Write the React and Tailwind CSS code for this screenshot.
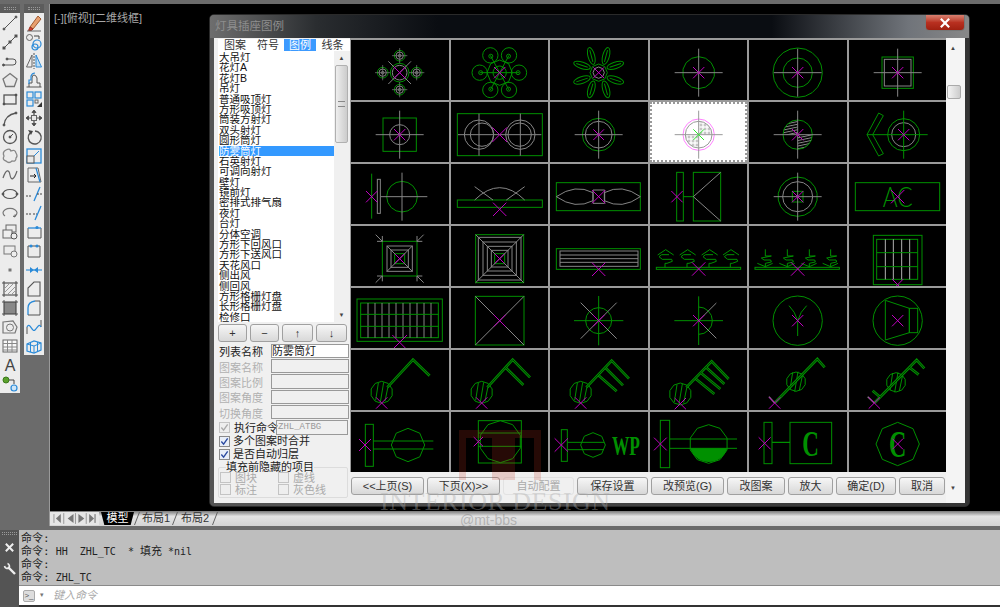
import React from 'react';

const G = '#009000';
const W = '#858585';
const M = '#c000c0';
const cjk = '"Liberation Sans", "Noto Sans CJK SC", sans-serif';

const ngon = (cx, cy, r, n, rot = -90) =>
  Array.from({ length: n }, (_, i) => {
    const a = ((rot + (360 * i) / n) * Math.PI) / 180;
    return `${(cx + r * Math.cos(a)).toFixed(1)},${(cy + r * Math.sin(a)).toFixed(1)}`;
  }).join(' ');

const L = ({ d, c = G, w = 3 }) => <path d={d} stroke={c} strokeWidth={w} fill="none" />;
const C = ({ x = 0, y = 0, r, c = G, w = 3 }) => <circle cx={x} cy={y} r={r} stroke={c} strokeWidth={w} fill="none" />;
const R = ({ x, y, x2, y2, c = G, w = 3 }) => <rect x={x} y={y} width={x2 - x} height={y2 - y} stroke={c} strokeWidth={w} fill="none" />;
const N = ({ x = 0, y = 0, r, n = 8, c = G, rot }) => <polygon points={ngon(x, y, r, n, rot)} stroke={c} strokeWidth={3} fill="none" />;
const X = ({ x = 0, y = 0, r = 17, c = M }) => (
  <path d={`M${x - r} ${y - r}L${x + r} ${y + r}M${x - r} ${y + r}L${x + r} ${y - r}`} stroke={c} strokeWidth={3} fill="none" />
);
const Cross = ({ a = 72, x = 0, c = W }) => <L d={`M${x - a} 0H${x + a}M${x} ${-a}V${a}`} c={c} />;
const Dbl = ({ d }) => (
  <>
    <L d={d} w={8} />
    <L d={d} c="#000" w={2} />
  </>
);
const Lamp = ({ x, y, r = 33 }) => (
  <>
    <N x={x} y={y} r={r} n={10} />
    <L d={`M${x - 18} ${y + 24}L${x - 10} ${y - 28}M${x - 4} ${y + 30}L${x + 6} ${y - 30}M${x + 10} ${y + 26}L${x + 20} ${y - 22}`} />
  </>
);
// squeezed serif letters, the symbols in the reference are tall and narrow
const Cad = ({ size, y = 0, x = 0, len, children }) => (
  <text x={x} y={y} fill={G} fontSize={size} fontWeight={700} fontFamily='"Liberation Serif", serif' textAnchor="middle" textLength={len} lengthAdjust="spacingAndGlyphs">
    {children}
  </text>
);

const sat = [[-51, 0], [51, 0], [0, -51], [0, 51]];
const flower = [[-28, -52], [28, -52], [-60, 0], [58, 0], [-28, 52], [28, 52]];
const petals = [[-22, -50, -15], [22, -50, 15], [-50, -22, -72], [50, -22, 72], [-50, 22, 72], [50, 22, -72], [-22, 50, 15], [22, 50, -15]];

const plantA = (x) => `M${x - 24} -11L${x} -27L${x + 24} -11M${x - 20} -6L${x - 12} -12H${x + 10}M${x - 20} -6L${x - 10} 2H${x + 18}L${x + 20} 8L${x + 4} 14H${x - 2}V26`;
const plantB = (x) => `M${x} -28V-8H${x + 18}L${x - 12} -2L${x - 4} 4H${x + 16}L${x + 18} 10L${x} 14M${x - 24} 14L${x} 24L${x + 22} 14M${x} 14V26`;

const cells = [
  // row 1
  <>
    <C r={28} /><C r={22} c={W} />
    <L d="M-34 -34L34 34M-34 34L34 -34" c={W} />
    {sat.map(([x, y], i) => (
      <g key={i}>
        <C x={x} y={y} r={16} /><C x={x} y={y} r={11} c={W} /><C x={x} y={y} r={4} c={W} />
        <L d={`M${x - 23} ${y}H${x + 23}M${x} ${y - 23}V${y + 23}`} c={W} w={2} />
      </g>
    ))}
    <X r={18} />
  </>,
  <>
    {flower.map(([x, y], i) => (
      <g key={i}><C x={x} y={y} r={23} /><C x={x * 0.95} y={y * 0.95} r={6} /></g>
    ))}
    <N r={38} n={8} /><C r={20} />
    <L d="M-60 0H58M-28 -52L28 52M28 -52L-28 52" />
    <X r={17} />
  </>,
  <>
    {petals.map(([x, y, a], i) => (
      <g key={i} transform={`translate(${x} ${y}) rotate(${a})`}>
        <ellipse rx={10} ry={26} stroke={G} strokeWidth={3} fill="none" />
        <L d="M0 -18V18" />
      </g>
    ))}
    <N r={26} n={8} /><N r={17} n={8} c={W} />
    <X r={16} />
  </>,
  <><N r={48} n={14} /><Cross /><X /></>,
  <><N r={74} n={20} /><C r={44} /><Cross /><X /></>,
  <><R x={-47} y={-47} x2={47} y2={47} /><R x={-40} y={-40} x2={40} y2={40} c={W} /><Cross /><X /></>,
  // row 2
  <><R x={-50} y={-50} x2={50} y2={50} /><C r={30} c={W} /><Cross /><X /></>,
  <>
    <R x={-127} y={-63} x2={128} y2={63} />
    <C x={-62} r={44} c={W} /><C x={-53} r={35} c={W} />
    <C x={62} r={44} c={W} /><C x={60} r={35} c={W} />
    <L d="M-125 0H125M-62 -63V63M62 -63V63" c={W} />
    <X r={22} />
  </>,
  <><C r={49} /><C r={40} c={W} /><Cross /><X r={16} /></>,
  <>
    <defs>
      <pattern id="dots" width="4" height="4" patternUnits="userSpaceOnUse">
        <rect width="4" height="4" fill="#fff" />
        <rect width="2" height="2" fill="#999" />
      </pattern>
    </defs>
    <path d="M0 0V-40A40 40 0 0 1 40 0ZM0 0V40A40 40 0 0 1 -40 0Z" fill="url(#dots)" />
    <C r={47} c="#ff80ff" /><C r={40} c="#999" />
    <Cross c="#999" />
    <X r={16} c="#30e830" />
  </>,
  <>
    <defs>
      <pattern id="hat" width="9" height="8" patternUnits="userSpaceOnUse" patternTransform="rotate(-12)">
        <rect width="9" height="3" fill="#888" />
      </pattern>
    </defs>
    <path d="M0 0V-44A44 44 0 0 0 -44 0ZM0 0V44A44 44 0 0 0 44 0Z" fill="url(#hat)" />
    <C r={44} /><Cross c={W} /><X />
  </>,
  <>
    <C x={18} r={48} /><C x={18} r={36} c={W} />
    <L d="M-92 0H90M18 -72V72" />
    <polygon points="-92,0 -57,-65 -43,-57 -75,0 -43,57 -57,64" stroke={G} strokeWidth={3} fill="none" />
    <X x={18} />
  </>,
  // row 3
  <>
    <L d="M-84 -69V66" />
    <R x={-67} y={-52} x2={-58} y2={50} c={W} />
    <N x={7} r={46} n={16} />
    <L d="M-57 0H83M7 -72V72" c={W} />
    <X x={-84} />
  </>,
  <>
    <R x={-127} y={10} x2={128} y2={32} />
    <L d="M-75 10Q0 -64 75 10M-75 -30L-20 10M75 -30L20 10" c={W} />
    <X y={38} r={20} />
  </>,
  <>
    <R x={-127} y={-42} x2={125} y2={42} />
    <L d="M-127 0Q-70 -40 -17 -12V12Q-70 40 -127 0ZM125 0Q70 -40 17 -12V12Q70 40 125 0ZM-17 -20H18V20H-17Z" c={W} />
    <X r={20} />
  </>,
  <>
    <R x={-66} y={-73} x2={-46} y2={73} />
    <R x={-16} y={-73} x2={66} y2={73} />
    <L d="M-46 0H-16" />
    <L d="M-16 0L66 -73M-16 0L66 73" c={W} />
    <X x={-65} />
  </>,
  <>
    <N r={59} n={18} /><C r={45} c={W} />
    <R x={-16} y={-16} x2={16} y2={16} />
    <Cross /><X />
  </>,
  <>
    <R x={-127} y={-42} x2={126} y2={42} />
    <text x={0} y={30} fill={G} fontSize={84} fontWeight={300} fontFamily='"Lato", sans-serif' textAnchor="middle" textLength={90} lengthAdjust="spacingAndGlyphs">AC</text>
    <X r={20} />
  </>,
  // row 4
  <>
    <R x={-52} y={-52} x2={52} y2={52} />
    <R x={-38} y={-38} x2={38} y2={38} c={W} />
    <R x={-26} y={-26} x2={26} y2={26} c={W} />
    <R x={-15} y={-15} x2={15} y2={15} />
    <L d="M-38 -38L38 38M-38 38L38 -38" c={W} />
    <L d="M-72 -72L-52 -52V-68M-52 -52H-68M72 -72L52 -52V-68M52 -52H68M-72 72L-52 52V68M-52 52H-68M72 72L52 52V68M52 52H68" c={W} />
    <X r={15} />
  </>,
  <>
    <R x={-72} y={-72} x2={72} y2={72} />
    <R x={-64} y={-64} x2={64} y2={64} c={W} />
    <R x={-50} y={-50} x2={50} y2={50} c={W} />
    <R x={-37} y={-37} x2={37} y2={37} c={W} />
    <R x={-25} y={-25} x2={25} y2={25} c={W} />
    <R x={-15} y={-15} x2={15} y2={15} />
    <L d="M-72 -72L72 72M-72 72L72 -72" c={W} />
    <X r={15} />
  </>,
  <>
    <R x={-127} y={-30} x2={125} y2={32} />
    <R x={-116} y={-23} x2={118} y2={23} c={W} />
    <L d="M-116 -11H118M-116 0H118M-116 11H118" c={W} />
    <X y={32} r={20} />
  </>,
  <>
    <R x={-127} y={26} x2={126} y2={32} />
    {[-99, -33, 33, 97].map((x) => <L key={x} d={plantA(x)} />)}
    <X y={31} r={20} />
  </>,
  <>
    <R x={-128} y={26} x2={125} y2={32} />
    {[-97, -31, 35, 99].map((x) => <L key={x} d={plantB(x)} />)}
    <X y={31} r={20} />
  </>,
  <>
    <R x={-73} y={-70} x2={73} y2={78} />
    <R x={-63} y={-58} x2={60} y2={62} />
    <L d="M-37 -58V62M-13 -58V62M12 -58V62M36 -58V62" c="#b0b0b0" />
    <L d="M-63 -18H60M-63 24H60" />
    <X y={78} />
  </>,
  // row 5
  <>
    <R x={-128} y={-65} x2={128} y2={62} />
    <R x={-117} y={-53} x2={116} y2={51} />
    <L d="M-95 -53V51M-74 -53V51M-53 -53V51M-32 -53V51M-11 -53V51M10 -53V51M31 -53V51M52 -53V51M73 -53V51M94 -53V51" c={W} />
    <L d="M-117 -19H116M-117 17H116" />
    <X y={65} r={22} />
  </>,
  <>
    <R x={-73} y={-73} x2={73} y2={73} />
    <L d="M-73 -73L73 73M-73 73L73 -73" c={W} />
    <X r={18} />
  </>,
  <>
    <C r={39} />
    <L d="M-54 -54L54 54M-54 54L54 -54" c={W} />
    <L d="M-74 0H74M0 -74V74" />
    <X />
  </>,
  <>
    <L d="M0 -73V73M-73 0H73M0 -41A41 41 0 0 1 0 41" />
    <L d="M0 0L53 -53M0 0L53 53" c={W} />
    <X />
  </>,
  <>
    <N r={74} n={24} />
    <L d="M0 0V46M0 0Q-8 -28 -26 -45M0 0Q8 -28 27 -45" />
    <X />
  </>,
  <>
    <N r={74} n={24} />
    <polygon points="-37,-61 35,-37 35,36 -37,58" stroke={G} strokeWidth={3} fill="none" />
    <R x={35} y={-37} x2={60} y2={36} />
    <X />
  </>,
  // row 6
  <>
    <Lamp x={-54} y={29} />
    <Dbl d="M-37 14L40 -69L90 -21" />
    <X x={-54} y={61} />
  </>,
  <>
    <Lamp x={-54} y={29} />
    <Dbl d="M-37 14L39 -69L91 -16M19 -44L71 7" />
    <X x={-54} y={61} />
  </>,
  <>
    <Lamp x={-54} y={29} />
    <Dbl d="M-37 14L39 -66L91 -12M21 -44L73 8M1 -21L54 26" />
    <X x={-54} y={61} />
  </>,
  <>
    <Lamp x={-55} y={34} />
    <Dbl d="M-37 14L39 -64L90 -11M22 -46L77 4M7 -29L65 19M-8 -11L47 34" />
    <X x={-55} y={63} />
  </>,
  <>
    <Lamp x={-5} y={-3} r={29} />
    <Dbl d="M-69 61L59 -71L81 -46" />
    <L d="M-86 42L-69 61" c={W} w={4} />
    <X x={-69} y={61} />
  </>,
  <>
    <Lamp x={-5} y={-1} r={29} />
    <Dbl d="M-70 61L57 -68L80 -43M35 -46L63 -24M-75 24L-52 44" />
    <L d="M-90 42L-70 61" c={W} w={4} />
    <X x={-70} y={61} />
  </>,
  // row 7
  <>
    <R x={-103} y={-61} x2={-79} y2={65} />
    <L d="M-79 -11H101M-79 13H101" />
    <N x={25} y={1} r={50} n={8} />
    <X x={-104} y={1} r={18} />
  </>,
  <>
    <R x={-64} y={-72} x2={65} y2={55} />
    <N x={2} y={-9} r={63} n={10} />
    <L d="M-64 -35H65M-64 5H65" />
    <X x={-64} y={-9} r={14} />
  </>,
  <>
    <R x={-112} y={-45} x2={-94} y2={50} />
    <L d="M-94 -7H16M-94 15H16" />
    <N x={-17} y={1} r={37} n={8} />
    <Cad size={82} x={82} y={30} len={84}>WP</Cad>
    <X x={-112} y={1} r={20} />
  </>,
  <>
    <R x={-115} y={-73} x2={-87} y2={69} />
    <path d="M-25 11H86A58 58 0 0 1 -25 11Z" fill={G} />
    <N x={30} y={-2} r={58} n={10} />
    <L d="M-87 -17H115M-87 11H115" />
    <X x={-115} y={-2} r={19} />
  </>,
  <>
    <R x={-101} y={-67} x2={-77} y2={57} />
    <R x={-23} y={-67} x2={102} y2={57} />
    <L d="M-77 -7H-23" w={4} />
    <Cad size={108} x={39} y={33} len={50}>C</Cad>
    <X x={-99} y={-4} r={18} />
  </>,
  <>
    <N y={-2} r={65} n={8} rot={-90} />
    <Cad size={112} x={0} y={36} len={52}>C</Cad>
    <X y={-2} r={16} />
  </>,
];

const Ico = ({ children }) => (
  <svg viewBox="0 0 18 18" className="w-[18px] h-[18px]" fill="none" stroke="#555" strokeWidth="1">
    {children}
  </svg>
);
const B = '#2a8ad8';

const tools1 = [
  <><path d="M3 15L15 3" /><circle cx="3" cy="15" r="1" fill="#555" /><circle cx="15" cy="3" r="1" fill="#555" /></>,
  <><path d="M3 15L15 3" /><rect x="2" y="14" width="2" height="2" fill="#444" /><rect x="14" y="2" width="2" height="2" fill="#444" /><rect x="8" y="8" width="2" height="2" fill="#444" /></>,
  <><path d="M3 13H12A3 3 0 0 0 12 7H6" /><circle cx="2.5" cy="13" r="1" fill="#444" /><circle cx="6" cy="7" r="1" fill="#444" /></>,
  <polygon points="9,2.5 16,8 13.3,15.5 4.7,15.5 2,8" fill="#e8e8e8" stroke="#777" strokeWidth="1.3" />,
  <><rect x="3" y="5" width="12" height="9" stroke="#555" strokeWidth="1.3" /><circle cx="3" cy="14" r="1" fill="#333" /><circle cx="15" cy="5" r="1" fill="#333" /></>,
  <><path d="M3 16Q4 6 15 4" strokeWidth="1.3" /><circle cx="3" cy="16" r="1" fill="#444" /><circle cx="15" cy="4" r="1" fill="#444" /></>,
  <><circle cx="9" cy="9" r="6.5" strokeWidth="1.3" /><path d="M9 9L12 6" /><circle cx="9" cy="9" r="1" fill="#444" /></>,
  <path d="M5 3Q9 1 10 4Q14 2 15 6Q17 9 15 11Q15 15 11 14Q8 17 5 14Q1 13 3 9Q1 5 5 3Z" stroke="#888" strokeWidth="1.3" />,
  <path d="M2 12C5 3 8 3 9 9S13 14 16 5" strokeWidth="1.2" stroke="#666" />,
  <><ellipse cx="9" cy="9" rx="7" ry="4.5" strokeWidth="1.2" /><circle cx="2" cy="9" r="1" fill="#444" /><circle cx="16" cy="9" r="1" fill="#444" /></>,
  <><path d="M4 12A7 4.5 0 1 1 14 12" strokeWidth="1.2" stroke="#777" /><path d="M12 12L14 13L14 10.5" /></>,
  <><rect x="5" y="2" width="10" height="7" stroke="#666" /><rect x="2" y="7" width="9" height="8" fill="#eee" stroke="#666" /><circle cx="13" cy="13" r="3" fill="#eee" /></>,
  <><rect x="3" y="4" width="11" height="8" stroke="#777" /><circle cx="13" cy="12" r="3" fill="#eee" stroke="#777" /></>,
  <rect x="7.5" y="7.5" width="3" height="3" fill="#777" stroke="none" />,
  <><rect x="3" y="3" width="12" height="12" stroke="#555" strokeWidth="1.2" /><path d="M3 9L9 3M3 13L13 3M6 15L15 6M10 15L15 10" stroke="#999" /><path d="M1 3H3V1M15 1V3H17M1 15H3V17M17 15H15V17" /></>,
  <><rect x="3" y="3" width="12" height="12" fill="#888" stroke="#444" strokeWidth="1.1" /><path d="M1 3H3V1M15 1V3H17M1 15H3V17M17 15H15V17" /></>,
  <><polygon points="2,4 12,3 16,9 14,15 2,15" stroke="#777" strokeWidth="1.2" /><circle cx="9" cy="9.5" r="3.5" stroke="#777" /></>,
  <><rect x="2" y="3" width="14" height="12" fill="#f8f8f8" stroke="#666" /><path d="M2 6.5H16M2 10H16M2 13H16M6.5 3V15M11 3V15" stroke="#888" /></>,
  <text x="9" y="15" textAnchor="middle" fontSize="16" fill="#444" stroke="none" fontFamily='"Liberation Sans", sans-serif'>A</text>,
  <><circle cx="5" cy="5" r="3" fill="#5aa02c" stroke="#3a7a1a" /><circle cx="13" cy="13" r="3" fill="#cfe6f8" stroke={B} strokeWidth="1.2" /><path d="M8 5H13V9" stroke="#444" /></>,
];

const tools2 = [
  <><path d="M5 13L13 2L16 5L8 15Z" fill="#e8a070" stroke="#a05a30" /><path d="M5 13L8 15L6.5 16.5H3.5Z" fill="#d04030" stroke="#a03020" /><path d="M2 17H16" stroke="#666" /></>,
  <><circle cx="4.5" cy="4.5" r="3" stroke="#666" /><circle cx="12" cy="11" r="4" stroke={B} strokeWidth="1.2" /><circle cx="10" cy="14" r="3" stroke={B} strokeWidth="1.2" /><path d="M9 3H14V6" stroke="#444" /></>,
  <><polygon points="7,3 7,15 1.5,15" stroke="#666" /><polygon points="11,3 11,15 16.5,15" fill="#bcdcf4" stroke={B} /><path d="M9 1V17" strokeDasharray="2 1" /></>,
  <><path d="M1.5 16H16.5M4 16V12H7V7Q7 4 9 4T12 7V12H15V16" stroke="#555" /><path d="M4 13V9H6V5Q7 2 10 2" stroke={B} strokeWidth="1.2" /></>,
  <><rect x="2" y="2" width="6" height="6" stroke={B} strokeWidth="1.2" /><rect x="10" y="2" width="6" height="6" stroke={B} strokeWidth="1.2" /><rect x="2" y="10" width="6" height="6" stroke={B} strokeWidth="1.2" /><rect x="10" y="10" width="3" height="3" stroke="#666" /><path d="M17 12V17H12Z" fill="#333" stroke="none" /></>,
  <><path d="M9 2V16M2 9H16" stroke="#444" strokeWidth="1.2" /><path d="M9 1L7 3.5H11ZM9 17L7 14.5H11ZM1 9L3.5 7V11ZM17 9L14.5 7V11Z" fill="#444" /><rect x="6.5" y="6.5" width="5" height="5" fill="#e8e8e8" stroke="#666" /></>,
  <><path d="M10 3A6.5 6.5 0 1 1 5 5" stroke="#555" strokeWidth="1.4" /><path d="M3 2L8 3L6 7Z" fill="#444" stroke="none" /></>,
  <><rect x="2" y="2" width="14" height="14" stroke={B} strokeWidth="1.3" /><rect x="2" y="9" width="7" height="7" fill="#e8e8e8" stroke="#555" /><path d="M9 9L14 4" stroke={B} /></>,
  <><path d="M3 2H13L16 16H3Z" stroke="#666" /><path d="M11 2L15 16" stroke={B} strokeWidth="1.2" /><path d="M5 10H11M9 8L11 10L9 12" stroke="#222" /></>,
  <><path d="M1 11H7" strokeDasharray="2 1" stroke="#444" /><path d="M9 16L15 2" stroke={B} strokeWidth="1.3" /><path d="M12 9H17" strokeDasharray="2 1" stroke="#444" /></>,
  <><path d="M1 10H7M8 10H12" strokeDasharray="2 1" stroke="#444" /><path d="M10 16L16 2" stroke={B} strokeWidth="1.3" /></>,
  <><path d="M3 5V15H16V5" stroke="#555" /><path d="M3 5H16" stroke={B} strokeWidth="1.3" /><circle cx="12" cy="4.5" r="1.6" fill={B} stroke="none" /></>,
  <><path d="M3 15V4H15V15H3" stroke="#555" /><circle cx="6" cy="4" r="1.6" fill={B} stroke="none" /><circle cx="12" cy="4" r="1.6" fill={B} stroke="none" /></>,
  <><path d="M1 9H17" stroke={B} strokeWidth="1.1" /><path d="M5 6L9 9L5 12ZM13 6L9 9L13 12Z" fill={B} stroke="none" /></>,
  <path d="M3 16V8L9 2H15V16Z" stroke="#555" strokeWidth="1.1" />,
  <><path d="M3 16V9Q3 3 10 2" stroke={B} strokeWidth="1.3" /><path d="M10 2H15V16H3" stroke="#555" /></>,
  <><path d="M2 16V9M16 2V9" stroke="#555" /><path d="M2 9C5 3 7 15 10 12S14 5 16 9" stroke={B} strokeWidth="1.2" /></>,
  <><path d="M2 7L9 4L16 6V13L9 16L2 14Z" stroke={B} strokeWidth="1.2" /><path d="M2 7L9 9L16 6M9 9V16M5.5 5.5V15M12.5 5V14.5" stroke={B} /></>,
];

const listItems = ['大吊灯', '花灯A', '花灯B', '吊灯', '普通吸顶灯', '方形吸顶灯', '筒装方射灯', '双头射灯', '圆形筒灯', '防雾筒灯', '石英射灯', '可调向射灯', '壁灯', '镜前灯', '密排式排气扇', '夜灯', '台灯', '分体空调', '方形下回风口', '方形下送风口', '天花风口', '侧出风', '侧回风', '方形格栅灯盘', '长形格栅灯盘', '检修口'];

const fields = [
  ['列表名称', '防雾筒灯', true],
  ['图案名称', '', false],
  ['图案比例', '', false],
  ['图案角度', '', false],
  ['切换角度', '', false],
];

const Toolbar = ({ items }) => (
  <div className="w-5 bg-[#ececec] flex flex-col items-center">
    <div className="w-full h-[9px] bg-[#5c5c5c] flex items-center justify-center">
      <div className="w-3 h-[3px] border-y border-dotted border-[#999]" />
    </div>
    {items.map((t, i) => (
      <div key={i} className="h-[19px] w-full flex items-center justify-center">
        <Ico>{t}</Ico>
      </div>
    ))}
  </div>
);

const Check = ({ checked, disabled }) => (
  <span className={`w-[11px] h-[11px] shrink-0 border flex items-center justify-center ${disabled ? 'border-[#c4c4c4] bg-[#eee]' : 'border-[#8a8a8a] bg-[#e8eef8]'}`}>
    {checked && (
      <svg viewBox="0 0 10 10" className="w-[9px] h-[9px]" fill="none" stroke={disabled ? '#aaa' : '#2a4aa0'} strokeWidth="1.5">
        <path d="M1.5 5L4 8L8.5 1.5" />
      </svg>
    )}
  </span>
);

const Btn = ({ w, children, disabled }) => (
  <button
    type="button"
    style={{ width: w }}
    className={`h-[18px] shrink-0 rounded-[3px] text-[11px] leading-none border ${disabled ? 'text-[#aaa] bg-[#f0f0f0] border-[#e2e2e2]' : 'text-[#333] border-[#a0a0a0] bg-gradient-to-b from-[#f6f6f6] to-[#d8d8d8]'}`}
  >
    {children}
  </button>
);

const Option = ({ label }) => (
  <label className="flex items-center gap-[4px] w-[58px] text-[11px] leading-[12px] text-[#aaa]">
    <Check disabled />
    {label}
  </label>
);

const Slant = () => (
  <svg viewBox="0 0 6 13" className="w-[6px] h-[13px] shrink-0" stroke="#666" fill="none"><path d="M5.5 0L0.5 13" /></svg>
);

const App = () => {
  return (
    <div className="relative w-[1000px] h-[607px] overflow-hidden bg-[#6b6b6b] flex flex-col" style={{ fontFamily: cjk }}>
      <div className="flex h-[526px] shrink-0">
        {/* left toolbars */}
        <div className="w-[48px] shrink-0 pt-1 flex items-start gap-1">
          <Toolbar items={tools1} />
          <Toolbar items={tools2} />
        </div>
        {/* drawing area */}
        <div className="flex-1 flex flex-col pt-[4px] pl-[1px]">
          <div className="flex-1 bg-black text-[#a8a8a8] text-[11px] leading-none pl-[4px] pt-[9px] border-l border-[#999]">[-][俯视][二维线框]</div>
          <div className="h-[15px] shrink-0 bg-[linear-gradient(180deg,#7a7a7a_0,#e4e4e4_35%,#d4d4d4_100%)] border-l border-[#999] flex items-center text-[11px] text-[#333]">
            <div className="h-[13px] w-[49px] bg-[#e6e6e6] flex items-center px-[2px]">
              <svg viewBox="0 0 46 11" className="w-[46px] h-[11px]" fill="#777">
                <path d="M9 1L4 5.5L9 10Z" />
                <path d="M2 1V10M12 0V11M24 0V11M35 0V11" stroke="#999" />
                <path d="M22 1L16 5.5L22 10ZM27 1L33 5.5L27 10ZM38 1L43 5.5L38 10Z" />
                <path d="M44 1V10" stroke="#666" />
              </svg>
            </div>
            <div className="h-[13px] w-[33px] ml-[2px] bg-black text-white flex items-center justify-center [clip-path:polygon(0_0,100%_0,90%_100%,10%_100%)]">模型</div>
            <Slant />
            <div className="w-[32px] text-center leading-[13px]">布局1</div>
            <Slant />
            <div className="w-[34px] text-center leading-[13px]">布局2</div>
            <Slant />
          </div>
        </div>
      </div>

      {/* command line */}
      <div className="mt-[4px] flex-1 flex">
        <div className="w-[19px] shrink-0 bg-[#545454] flex flex-col items-center pt-[2px] gap-[6px]">
          <div className="w-[15px] h-[3px] border-y border-dotted border-[#999]" />
          <svg viewBox="0 0 12 12" className="w-[11px] h-[11px] mt-[1px]" stroke="#eee" strokeWidth="2.2"><path d="M2 2L10 10M10 2L2 10" /></svg>
          <svg viewBox="0 0 14 14" className="w-[14px] h-[14px] mt-[3px]" stroke="#eee" fill="none" strokeWidth="2.4"><path d="M5 5L12 12" /><path d="M1.5 4A3 3 0 0 0 6 6A3 3 0 0 0 4.5 1.5" strokeWidth="1.6" /></svg>
        </div>
        <div className="flex-1 flex flex-col">
          <div className="h-[56px] bg-[#bebebe] pl-[2px] pt-[2px] border-b border-[#8a8a8a] text-[#222] text-[11px] leading-[13px] whitespace-pre" style={{ fontFamily: '"DejaVu Sans Mono", "Noto Sans CJK SC", monospace' }}>
            <div>命令:</div>
            <div className="text-[10px]"><span className="text-[11px]">命令:</span> HH  ZHL_TC  * <span className="text-[11px]">填充</span> *nil</div>
            <div>命令:</div>
            <div className="text-[10px]"><span className="text-[11px]">命令:</span> ZHL_TC</div>
          </div>
          <div className="h-[19px] bg-white flex items-center pl-[4px] gap-[2px]">
            <div className="w-[12px] h-[12px] rounded-[2px] border border-[#aaa] bg-[#ddd] text-[8px] leading-[10px] text-[#555] text-center">&gt;_</div>
            <span className="text-[#777] text-[7px] w-[10px] text-center">▾</span>
            <span className="text-[#aaa] text-[11px] ml-[4px] italic">键入命令</span>
          </div>
          <div className="h-[2px] bg-[#333]" />
        </div>
      </div>

      {/* dialog window */}
      <div className="absolute left-[209px] top-[14px] w-[761px] h-[493px] rounded-[5px] border border-[#2a2a2a] bg-[linear-gradient(90deg,#555_0,#333_100%)] flex flex-col overflow-hidden">
        <div className="h-[23px] shrink-0 flex items-start bg-[linear-gradient(90deg,#6e6e6e_0,#2a2d30_14%,#0a0d12_30%,#0a0d12_74%,#70747a_92%,#888_100%)]">
          <span className="ml-[5px] mt-[4px] text-[#8e8e8e] text-[11.5px] leading-[14px]">灯具插座图例</span>
          <div className="ml-auto mr-[4px] w-[40px] h-[17px] -mt-[1px] rounded-b-[4px] border border-[#777] bg-gradient-to-b from-[#d88070] via-[#b83020] to-[#a02010] flex items-center justify-center">
            <svg viewBox="0 0 12 12" className="w-[10px] h-[10px]" stroke="#fff" strokeWidth="2.6"><path d="M1 1L11 11M11 1L1 11" /></svg>
          </div>
        </div>
        <div className="ml-[4px] w-[751px] h-[465px] bg-[#f0f0f0] flex">
          {/* left panel */}
          <div className="w-[136px] shrink-0 pl-[4px] text-[11px]">
            <div className="h-[12px] mt-[1px] bg-white flex text-[#333] leading-[12px] text-center">
              <div className="w-[34px]">图案</div>
              <div className="w-[32px]">符号</div>
              <div className="w-[32px] bg-[#3c9aff] text-white">图例</div>
              <div className="w-[33px]">线条</div>
            </div>
            <div className="h-[271px] w-[131px] bg-white flex overflow-hidden">
              <div className="w-[116px] text-[#111] text-[10.5px] leading-[10.4px] pl-[1px] pt-[1px]">
                {listItems.map((item, i) => (
                  <div key={item} className={`h-[10.4px] whitespace-nowrap ${i === 9 ? 'bg-[#3399ff] text-white' : ''}`}>{item}</div>
                ))}
              </div>
              <div className="w-[15px] bg-[#f0f0f0] flex flex-col items-center">
                <span className="text-[6px] leading-[14px] text-[#444]">▲</span>
                <div className="w-[13px] h-[78px] rounded-[2px] bg-gradient-to-r from-[#eee] to-[#ccc] border border-[#b0b0b0] flex items-center justify-center">
                  <div className="w-[7px] h-[6px] border-y border-[#888]" />
                </div>
                <span className="mt-auto text-[6px] leading-[14px] text-[#444]">▼</span>
              </div>
            </div>
            <div className="flex gap-[3px] mt-[2px] text-[#222]">
              <Btn w="29px">+</Btn>
              <Btn w="29px">−</Btn>
              <Btn w="31px">↑</Btn>
              <Btn w="31px">↓</Btn>
            </div>
            <div className="mt-[1px] w-[131px]">
              {fields.map(([label, value, on]) => (
                <div key={label} className="flex h-[15.4px] items-center">
                  <span className={`w-[53px] pl-[1px] pt-[3px] text-[11px] leading-[12px] ${on ? 'text-[#222]' : 'text-[#b0b0b0]'}`}>{label}</span>
                  <div className={`w-[78px] h-[14.4px] border border-[#999] text-[11px] leading-[13px] text-[#222] ${on ? 'bg-white' : 'bg-[#f0f0f0]'}`}>{value}</div>
                </div>
              ))}
            </div>
            <div className="flex items-center h-[15px] pl-[1px] leading-none text-[#222]">
              <Check checked disabled />
              <span className="ml-[4px] pt-[2px] w-[42px] whitespace-nowrap">执行命令</span>
              <div className="w-[72px] h-[15px] border border-[#999] text-[#999] text-[9px] leading-[13px] pl-[1px]" style={{ fontFamily: '"Liberation Mono", monospace' }}>ZHL_ATBG</div>
            </div>
            <div className="flex items-center h-[13px] pl-[1px] text-[#222] leading-none"><Check checked /><span className="ml-[3px] pt-[1px]">多个图案时合并</span></div>
            <div className="flex items-center h-[13px] pl-[1px] text-[#222] leading-none"><Check checked /><span className="ml-[3px] pt-[1px]">是否自动归层</span></div>
            <fieldset className="w-[130px] h-[36px] border border-[#dcdcdc] rounded-[2px] mt-[1px]">
              <legend className="ml-[7px] text-[#222] leading-[11px]">填充前隐藏的项目</legend>
              <div className="flex pl-[1px] -mt-[1px]"><Option label="图块" /><Option label="虚线" /></div>
              <div className="flex pl-[1px]"><Option label="标注" /><Option label="灰色线" /></div>
            </fieldset>
          </div>
          {/* picture grid */}
          <div className="w-[596px] shrink-0">
            <div className="grid grid-cols-6 auto-rows-[60px] gap-[2px] bg-[#9a9a9a] pt-[2px] pl-[1px]">
              {cells.map((icon, i) => (
                <div key={i} className={i === 9 ? 'bg-white outline-2 outline-dotted -outline-offset-2 outline-[#999]' : 'bg-black'}>
                  <svg viewBox="-146 -98 292.5 180" preserveAspectRatio="none" className="block w-full h-full">
                    {icon}
                  </svg>
                </div>
              ))}
            </div>
            <div className="flex mt-[5px] pl-[1px] gap-[3px]">
              <Btn w="73px">&lt;&lt;上页(S)</Btn>
              <Btn w="73px">下页(X)&gt;&gt;</Btn>
              <Btn w="71px" disabled>自动配置</Btn>
              <Btn w="71px">保存设置</Btn>
              <Btn w="73px">改预览(G)</Btn>
              <Btn w="58px">改图案</Btn>
              <Btn w="45px">放大</Btn>
              <Btn w="60px">确定(D)</Btn>
              <Btn w="46px">取消</Btn>
            </div>
          </div>
          {/* outer scrollbar */}
          <div className="w-[19px] flex flex-col pl-[1px] bg-[#f4f4f4]">
            <span className="text-[6px] leading-[18px] pl-[3px] text-[#444] mt-[1px]">▲</span>
            <div className="w-[14px] h-[14px] mt-[28px] rounded-[2px] border border-[#aaa] bg-gradient-to-r from-[#f4f4f4] to-[#ccc]" />
            <span className="mt-auto mb-[6px] text-[6px] leading-[18px] pl-[3px] text-[#444]">▼</span>
          </div>
        </div>
      </div>

      {/* watermark */}
      <svg viewBox="0 0 82 50" className="absolute left-[459px] top-[430px] w-[82px] h-[50px] pointer-events-none" fill="#c03020" fillOpacity="0.2">
        <path d="M0 0H82V50H75V8H56V50H33V8H7V50H0Z" />
      </svg>
      <div className="absolute left-[380px] top-[489px] text-[26px] leading-[26px] tracking-[0.5px] text-[#aaa]/40 whitespace-nowrap pointer-events-none" style={{ fontFamily: '"Liberation Serif", serif' }}>
        INTERIOR DESIGN
      </div>
      <div className="absolute left-[460px] top-[512px] text-[14px] leading-[16px] text-[#888]/50 pointer-events-none">@mt-bbs</div>
    </div>
  );
};

export default App;
